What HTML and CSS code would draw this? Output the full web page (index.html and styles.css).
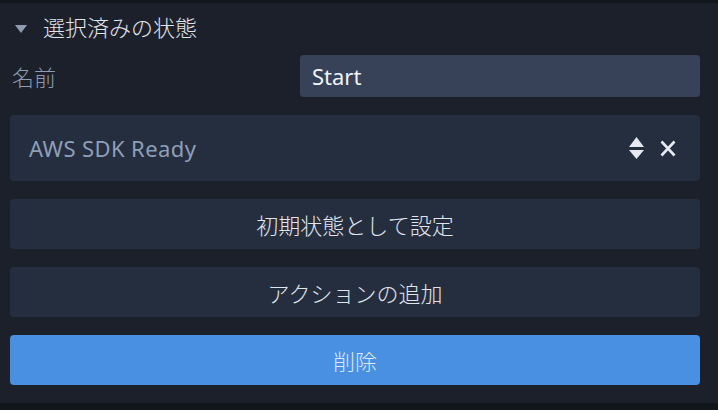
FILE: index.html
```html
<!DOCTYPE html>
<html lang="ja">
<head>
<meta charset="utf-8">
<link rel="stylesheet" href="styles.css">
</head>
<body>
<div class="panel">
  <div class="header">
    <span class="caret"></span>
    <span class="title">選択済みの状態</span>
  </div>
  <div class="content">
    <div class="name-row">
      <span class="label">名前</span>
      <div class="input">Start</div>
    </div>
    <div class="select">
      <span class="select-text">AWS SDK Ready</span>
      <span class="select-icons">
        <svg class="updown" width="15" height="22" viewBox="0 0 15 22">
          <polygon points="7.5,0 15,10 0,10" fill="#e6eaf0"/>
          <polygon points="0,13 15,13 7.5,22" fill="#e6eaf0"/>
        </svg>
        <svg class="clear" width="16" height="17" viewBox="0 0 16 17">
          <path d="M1.5 1.5 L14.5 15.5 M14.5 1.5 L1.5 15.5" stroke="#e6eaf0" stroke-width="2.6" stroke-linecap="butt"/>
        </svg>
      </span>
    </div>
    <button class="btn">初期状態として設定</button>
    <button class="btn">アクションの追加</button>
    <button class="btn danger">削除</button>
  </div>
</div>
</body>
</html>
```
FILE: styles.css
```css
html, body {
  margin: 0;
  padding: 0;
}
body {
  background: #12151c;
  width: 718px;
  height: 410px;
  overflow: hidden;
  font-family: "Noto Sans", "Noto Sans CJK JP", sans-serif;
  font-size: 22px;
}
.panel {
  margin-top: 3px;
  height: 400px;
  box-sizing: border-box;
  background: #1c202b;
  padding: 0 18px 18px 10px;
  display: flex;
  flex-direction: column;
}
.header {
  height: 48px;
  margin-bottom: 4px;
  display: flex;
  align-items: center;
}
.caret {
  width: 0;
  height: 0;
  border-left: 6px solid transparent;
  border-right: 6px solid transparent;
  border-top: 8px solid #8e9cb4;
  margin-left: 5px;
  margin-right: 16px;
  margin-top: 3px;
}
.title {
  color: #e0e4eb;
  line-height: 1;
  font-weight: 300;
}
.content {
  display: flex;
  flex-direction: column;
  gap: 18px;
}
.name-row {
  display: flex;
  align-items: center;
  height: 42px;
}
.label {
  flex: 1;
  color: #8e9bb2;
  padding-left: 2px;
  font-weight: 300;
}
.input {
  width: 400px;
  height: 42px;
  box-sizing: border-box;
  background: #374259;
  border-radius: 4px;
  color: #f1f3f6;
  padding-left: 12px;
  display: flex;
  align-items: center;
}
.select {
  height: 66px;
  background: #252e3f;
  border-radius: 4px;
  display: flex;
  align-items: center;
  justify-content: space-between;
  padding: 0 24px 0 19px;
}
.select-text {
  color: #8f9fb8;
  letter-spacing: 0.4px;
}
.select-icons {
  display: flex;
  align-items: center;
  gap: 16px;
}
.updown {
  display: block;
}
.clear {
  display: block;
}
.btn {
  height: 50px;
  border: none;
  border-radius: 4px;
  background: #252e3f;
  color: #e0e4eb;
  font-family: inherit;
  font-size: 22px;
  font-weight: 300;
  padding: 0;
  width: 100%;
}
.btn.danger {
  background: #4a90e2;
  color: #dde9f8;
}
```
